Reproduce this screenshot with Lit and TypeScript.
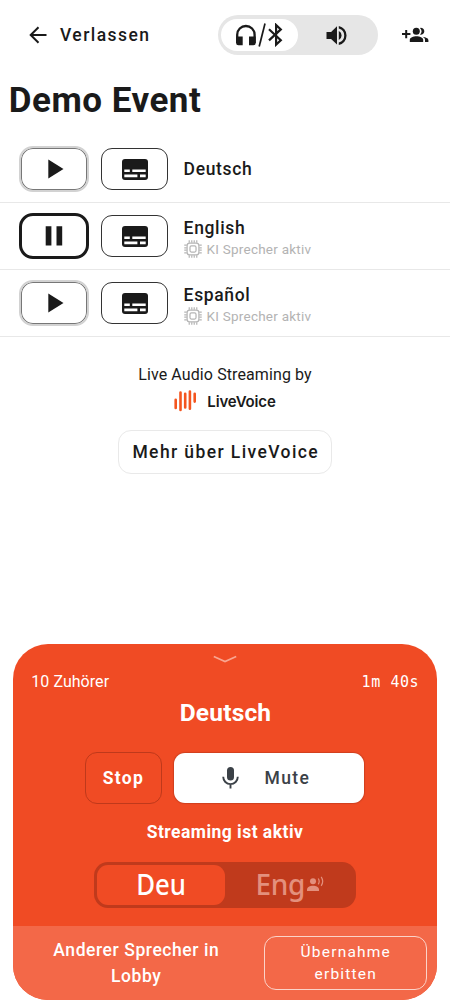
import { LitElement, html, css, svg } from "lit";
import { customElement } from "lit/decorators.js";

const channels = [
  { name: "Deutsch", playing: false, ai: false },
  { name: "English", playing: true, ai: true },
  { name: "Español", playing: false, ai: true },
];

const pins = [6.4, 9.5, 12.5, 15.6];

const chip = html`<svg class="chip" viewBox="0 0 22 22" fill="none" stroke="#b5b5b5" stroke-width="1.5">
  <rect x="3.8" y="3.800" width="14.400" height="14.400" rx="3.200" />
  <rect x="7.300" y="7.300" width="7.400" height="7.400" rx="1.800" />
  ${pins.map((p) => svg`<path d="M${p} .3v3.100M${p} 18.600v3.100M.3 ${p}h3.100M18.600 ${p}h3.100" />`)}
</svg>`;

const play = html`<svg width="70" height="46" viewBox="0 0 70 46"><path d="M29.300 13.500v19L44.500 23z" fill="#1a1a1a" /></svg>`;
const pause = html`<svg width="70" height="46" viewBox="0 0 70 46"><path d="M26.700 13.300h5.700v19.300h-5.700zM37.500 13.300h5.700v19.300h-5.700z" fill="#1a1a1a" /></svg>`;
const subtitles = html`<svg width="26" height="21" viewBox="0 0 26 21">
  <rect width="26" height="21" rx="3" fill="#1a1a1a" />
  <path d="M2.300 10.400h5.500v2.700H2.300zM10.300 10.400h13.400v2.700H10.300zM2.300 15.600h13.100v2.700H2.300zM18 15.600h5.700v2.700H18z" fill="#fff" />
</svg>`;

@customElement("app-root")
export class AppRoot extends LitElement {
  static styles = css`
    :host { display: flex; flex-direction: column; height: 1000px; width: 450px; overflow: hidden; background: #fff; color: #1a1a1a; font-family: Roboto, sans-serif; }
    * { box-sizing: border-box; }
    svg { display: block; flex: none; }
    header { display: flex; align-items: center; height: 70px; padding-left: 28.5px; }
    .leave { font-size: 17.500px; font-weight: 500; letter-spacing: 1.450px; margin-left: 13.500px; width: 157.500px; line-height: 20px; }
    .toggle { display: flex; width: 160px; height: 40px; border-radius: 20px; background: #e6e6e6; padding: 4px 3px; }
    .output { display: flex; align-items: center; width: 77px; height: 32px; border-radius: 16px; background: #fff; padding-left: 14.500px; }
    .speaker { margin: 4px 0 0 26px; }
    .people { margin-left: 24px; }
    h1 { margin: 0; height: 66px; padding: 10px 0 0 8.800px; font-size: 35px; line-height: 42px; font-weight: 700; letter-spacing: 0.5px; }
    .row { display: flex; height: 67px; border-bottom: 1.500px solid #e8e8e8; padding: 9.500px 0 0 19px; }
    .play { width: 70px; height: 46px; border-radius: 14px; border: 2px solid #d2d2d2; display: grid; place-items: center; box-shadow: inset 0 0 0 1px #777; }
    .play svg { margin: -2px; }
    .play.on { border: 3px solid #1a1a1a; box-shadow: none; }
    .play.on svg { margin: -3px; }
    .cc { width: 66.500px; height: 42px; margin: 2px 0 0 12.300px; border: 1px solid #333; border-radius: 11px; display: grid; place-items: center; padding-top: 1px; }
    .info { margin-left: 15.800px; display: flex; flex-direction: column; justify-content: center; height: 46px; }
    .name { font-size: 17.500px; font-weight: 500; line-height: 22px; letter-spacing: 0.65px; }
    .name.first { margin-top: 4px; }
    .ai { display: flex; align-items: center; gap: 5px; font-size: 13.500px; line-height: 20px; letter-spacing: 0.23px; color: #b3b3b3; }
    .chip { width: 18px; height: 18px; }
    .by { text-align: center; font-size: 16px; line-height: 20px; letter-spacing: 0.1px; margin-top: 28px; }
    .logo { display: flex; justify-content: center; align-items: center; gap: 10px; height: 24px; margin-top: 4px; font-family: Inter, sans-serif; font-size: 15px; font-weight: 600; letter-spacing: -0.15px; }
    .more { align-self: center; width: 214px; height: 44px; margin-top: 17px; border: 1px solid #e9e9e9; border-radius: 13px; font-size: 17.500px; font-weight: 500; letter-spacing: 1.400px; padding-left: 1.500px; display: grid; place-items: center; white-space: nowrap; }
    .card { margin: auto 13.300px 0; height: 355.700px; border-radius: 35px; background: #f04b24; overflow: hidden; color: #fff; display: flex; flex-direction: column; align-items: center; flex: none; }
    .chev { margin-top: 11px; }
    .stats { display: flex; justify-content: space-between; width: 100%; padding: 0 17.500px 0 18px; height: 20px; margin-top: 9px; font-size: 16px; line-height: 20px; letter-spacing: 0.05px; }
    .time { font-family: "DejaVu Sans Mono", monospace; font-size: 15px; letter-spacing: 0.57px; white-space: pre; }
    .title { font-size: 24.500px; line-height: 30px; margin: 6px 0 0 1px; font-weight: 700; letter-spacing: 0.17px; }
    .actions { display: flex; gap: 12px; margin: 24px 2px 0 0; }
    .stop { width: 77px; height: 52px; border: 1px solid #bf391b; border-radius: 12px; display: grid; place-items: center; padding-left: 1px; font-size: 17.500px; font-weight: 700; letter-spacing: 1.300px; }
    .mute { width: 190px; height: 50px; margin-top: 1px; border-radius: 11px; background: #fff; color: #3b4147; box-shadow: 0 0 1px 1px #d0401f; display: flex; align-items: center; padding-left: 48px; gap: 26px; font-size: 17.500px; font-weight: 500; letter-spacing: 1.400px; }
    .status { font-size: 17.500px; font-weight: 700; line-height: 20px; margin-top: 18px; letter-spacing: 0.470px; }
    .langs { display: flex; width: 262px; height: 46px; border-radius: 14px; background: #c03a1c; margin-top: 19.500px; padding: 3px; font-family: "Noto Sans", sans-serif; font-size: 28px; line-height: 38px; }
    .cur { width: 128px; height: 40px; border-radius: 11px; background: #f04b24; display: grid; justify-content: center; font-weight: 500; }
    .cur span { transform: scaleX(0.92); }
    .other { display: flex; padding-left: 30.500px; gap: 2px; color: #e3907d; letter-spacing: -0.3px; font-weight: 500; }
    .other svg { margin-top: 11px; }
    footer { margin-top: auto; width: 100%; height: 74.500px; flex: none; background: #f36848; display: flex; }
    .lobby { width: 246px; text-align: center; padding-top: 11px; font-size: 17.500px; line-height: 26px; font-weight: 500; letter-spacing: 0.570px; }
    .request { width: 163px; height: 54px; margin: 10px 0 0 4.500px; border: 1.300px solid #fbd3c9; border-radius: 12px; text-align: center; font-size: 15.500px; line-height: 22px; padding: 4px 0 0 1px; letter-spacing: 1.200px; }
  `;

  render() {
    return html`
      <header>
        <svg width="18" height="18" viewBox="0 0 18 18" fill="none" stroke="#1a1a1a" stroke-width="2"><path d="M17.500 9H2M9.500 1.200L1.700 9l7.800 7.800" /></svg>
        <span class="leave">Verlassen</span>
        <div class="toggle">
          <div class="output">
            <svg width="49" height="24" viewBox="0 0 49 24">
              <path d="M2.200 20v-8.300a8.700 8.700 0 0 1 17.400 0V20" fill="none" stroke="#1a1a1a" stroke-width="2.300" />
              <path d="M1.100 13.500h6.600v8.800H3.400a2.300 2.300 0 0 1-2.300-2.300zM14 13.500h6.700V20a2.300 2.300 0 0 1-2.300 2.300H14z" fill="#1a1a1a" />
              <path d="M24.200 23.500L30 .5" stroke="#1a1a1a" stroke-width="1.700" />
              <path d="M34 6.200l11.800 11-4.700 4.400V2l4.700 4.400-11.800 11" fill="none" stroke="#1a1a1a" stroke-width="2.200" />
            </svg>
          </div>
          <svg class="speaker" width="24" height="24" viewBox="0 0 24 24" fill="#1a1a1a"><path d="M2.500 9v7h4.600l5.900 5.600V3.300L7.100 9zM14.800 8a5 5 0 0 1 0 9zM14.800 3v2.600a7.100 7.100 0 0 1 0 13.800V22a9.700 9.700 0 0 0 0-19z" /></svg>
        </div>
        <svg class="people" width="27" height="16" viewBox="0 0 27 16" fill="#1a1a1a">
          <path d="M3.200 3h2v3.100h3.200v2H5.200v3.200h-2V8.100H0v-2h3.200zM7.800 15v-2.200c0-2.400 3.600-3.600 6.700-3.600s6.700 1.200 6.700 3.600V15zM20.500 9.700c3 .4 5.900 1.500 5.900 3.400V15H23v-2.200c0-1.300-.8-2.300-2.500-3.100z" />
          <circle cx="14.300" cy="4.300" r="3.500" /><path d="M18 .9a3.500 3.500 0 1 1 0 6.800 5 5 0 0 0 0-6.800z" />
        </svg>
      </header>
      <h1>Demo Event</h1>
      ${channels.map((c) => html`<div class="row">
        <div class="play ${c.playing ? "on" : ""}">${c.playing ? pause : play}</div>
        <div class="cc">${subtitles}</div>
        <div class="info"><span class="name ${c.ai ? "first" : ""}">${c.name}</span>${c.ai ? html`<span class="ai">${chip}KI Sprecher aktiv</span>` : ""}</div>
      </div>`)}
      <div class="by">Live Audio Streaming by</div>
      <div class="logo">
        <svg width="23" height="22" viewBox="0 0 23 22" stroke="#f4551f" stroke-width="2.600" stroke-linecap="round"><path d="M1.700 9.800v8.200M6.500 2.500v17.400M11.200 3.700v13.800M15.900 1.500v17.300M20.700 3.700v7.900" /></svg>
        <span>LiveVoice</span>
      </div>
      <div class="more">Mehr über LiveVoice</div>
      <section class="card">
        <svg class="chev" width="24" height="8" viewBox="0 0 24 8"><path d="M.800 1.500L12 6.500l11.200-5" fill="none" stroke="#f9a590" stroke-width="1.800" /></svg>
        <div class="stats"><span>10 Zuhörer</span><span class="time">1m 40s</span></div>
        <div class="title">Deutsch</div>
        <div class="actions">
          <div class="stop">Stop</div>
          <div class="mute">
            <svg width="17" height="22" viewBox="0 0 17 22"><rect x="5" y="0" width="7" height="13.500" rx="3.500" fill="#3b4147" /><path d="M1.200 9.800a7.300 7.300 0 0 0 14.600 0M8.500 17v4.500" fill="none" stroke="#3b4147" stroke-width="1.900" /></svg>
            <span>Mute</span>
          </div>
        </div>
        <div class="status">Streaming ist aktiv</div>
        <div class="langs">
          <div class="cur"><span>Deu</span></div>
          <div class="other"><span>Eng</span>
            <svg width="17" height="16" viewBox="0 0 17 16" fill="#e3907d"><circle cx="6" cy="5.300" r="3" /><path d="M0 15v-1.500c0-2.500 3-3.800 6-3.800s6 1.300 6 3.800V15z" /><path d="M11.200 2.500q2 2.900 0 5.800M14.200.8q3 4.500 0 9" fill="none" stroke="#e3907d" stroke-width="1.200" /></svg>
          </div>
        </div>
        <footer>
          <div class="lobby">Anderer Sprecher in<br />Lobby</div>
          <div class="request">Übernahme<br />erbitten</div>
        </footer>
      </section>
    `;
  }
}
